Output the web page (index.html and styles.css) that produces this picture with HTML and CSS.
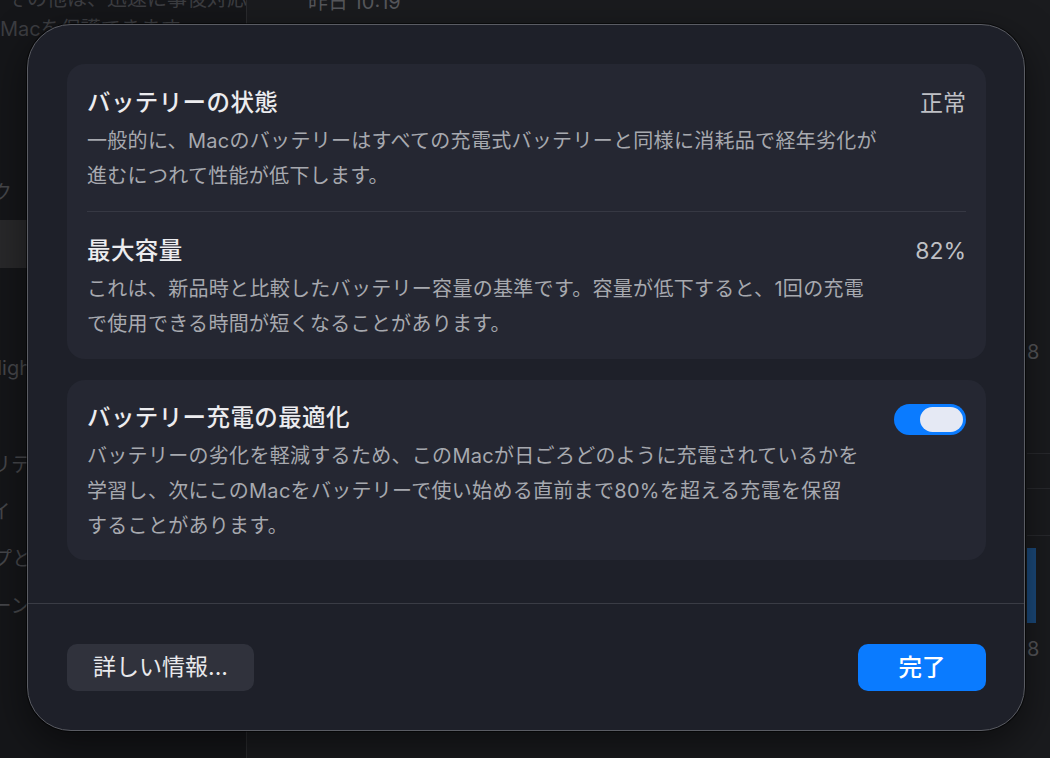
FILE: index.html
```html
<!DOCTYPE html>
<html lang="ja">
<head>
<meta charset="utf-8">
<title>バッテリーの状態</title>
<link rel="stylesheet" href="styles.css">
</head>
<body>
<div class="app">
  <aside class="sidebar">
    <p class="side-note">その他は、迅速に事後対応して<br>Macを保護できます。</p>
    <ul class="side-list">
      <li class="side-item">ネットワーク</li>
      <li class="side-item selected">バッテリー</li>
      <li class="side-item gap-l">Siri と Spotlight</li>
      <li class="side-item gap-m">アクセシビリティ</li>
      <li class="side-item">ディスプレイ</li>
      <li class="side-item">デスクトップと Dock</li>
      <li class="side-item">タイムマシーン</li>
    </ul>
  </aside>
  <main class="main">
    <div class="main-content">
      <div class="time">昨日 10:19</div>
    </div>
    <div class="chart">
      <div class="axis-label first">8</div>
      <div class="gridline g1"></div>
      <div class="gridline g2"></div>
      <div class="gridline g3"></div>
      <div class="bar"></div>
      <div class="axis-label last">8</div>
    </div>
  </main>
</div>

<div class="dialog" role="dialog">
  <div class="dialog-body">
    <section class="card">
      <div class="row row-top">
        <div class="row-text">
          <h2 class="row-title">バッテリーの状態</h2>
          <p class="row-desc">一般的に、Macのバッテリーはすべての充電式バッテリーと同様に消耗品で経年劣化が<br>進むにつれて性能が低下します。</p>
        </div>
        <div class="row-value">正常</div>
      </div>
      <div class="card-divider"></div>
      <div class="row row-top">
        <div class="row-text">
          <h2 class="row-title">最大容量</h2>
          <p class="row-desc">これは、新品時と比較したバッテリー容量の基準です。容量が低下すると、1回の充電<br>で使用できる時間が短くなることがあります。</p>
        </div>
        <div class="row-value">82%</div>
      </div>
    </section>
    <section class="card">
      <div class="row row-single">
        <div class="row-text">
          <h2 class="row-title">バッテリー充電の最適化</h2>
          <p class="row-desc">バッテリーの劣化を軽減するため、このMacが日ごろどのように充電されているかを<br>学習し、次にこのMacをバッテリーで使い始める直前まで80%を超える充電を保留<br>することがあります。</p>
        </div>
        <div class="toggle on" role="switch" aria-checked="true"><span class="knob"></span></div>
      </div>
    </section>
  </div>
  <div class="dialog-divider"></div>
  <div class="dialog-footer">
    <button class="btn btn-secondary">詳しい情報...</button>
    <button class="btn btn-primary">完了</button>
  </div>
</div>
</body>
</html>
```

FILE: styles.css
```css
* { box-sizing: border-box; }

html, body {
  margin: 0;
  padding: 0;
}

body {
  width: 1050px;
  height: 758px;
  overflow: hidden;
  background: #131417;
  font-family: "Inter", "Noto Sans CJK JP", "Noto Sans", sans-serif;
  position: relative;
}

/* ---------- background window ---------- */
.app {
  display: grid;
  grid-template-columns: 247px 1fr;
  height: 758px;
}

.sidebar {
  background: #151619;
  border-right: 1px solid #2a2b2e;
  overflow: hidden;
}

.side-note {
  margin: -16px 0 0 0;
  font-size: 20px;
  line-height: 30px;
  color: #3c3d41;
  text-indent: 7px;
  white-space: nowrap;
}

.side-list {
  list-style: none;
  margin: 124px 0 0 -108px;
  padding: 0;
}

.side-item {
  height: 47px;
  display: flex;
  align-items: center;
  font-size: 20px;
  color: #46474b;
  white-space: nowrap;
}

.side-item.selected {
  height: 48px;
  margin-top: 5px;
  background: #29292b;
}

.side-item.gap-l { margin-top: 75px; }
.side-item.gap-m { margin-top: 50px; }

.main {
  background: #1a1b1e;
  display: grid;
  grid-template-columns: 1fr 23px;
  overflow: hidden;
}

.main-content {
  padding-left: 61px;
}

.time {
  margin-top: -12px;
  font-size: 20px;
  line-height: 28px;
  color: #56575b;
}

.chart {
  display: flex;
  flex-direction: column;
  padding-top: 340px;
}

.axis-label {
  height: 24px;
  line-height: 24px;
  font-size: 20px;
  color: #55565a;
}

.axis-label.last { margin-top: 14px; }

.gridline {
  height: 1px;
  background: #28292d;
}

.g1 { margin-top: 89px; }
.g2 { margin-top: 34px; }
.g3 { margin-top: 46px; }

.bar {
  margin-top: 12px;
  width: 9px;
  height: 75px;
  background: #1b4a7c;
}

/* ---------- dialog ---------- */
.dialog {
  position: absolute;
  left: 27px;
  top: 24px;
  width: 998px;
  background: #1e2029;
  border: 1px solid #5a5c63;
  border-radius: 44px;
  box-shadow: 0 0 0 1px rgba(0, 0, 0, 0.55), 0 14px 40px rgba(0, 0, 0, 0.5);
  display: flex;
  flex-direction: column;
  overflow: hidden;
}

.dialog-body {
  padding: 39px 38px 0 39px;
  display: flex;
  flex-direction: column;
  gap: 21px;
}

.card {
  background: #252732;
  border-radius: 18px;
}

.row {
  display: flex;
  justify-content: space-between;
  align-items: flex-start;
  padding: 25px 20px 17px 20px;
}

.row-single {
  padding: 24px 20px 16px 20px;
}

.row-text {
  display: flex;
  flex-direction: column;
  gap: 7px;
}

.row-title {
  margin: 0;
  font-size: 23.5px;
  line-height: 28px;
  font-weight: 500;
  letter-spacing: 0.4px;
  color: #ececef;
  white-space: nowrap;
}

.row-desc {
  margin: 0;
  font-size: 20px;
  line-height: 35px;
  letter-spacing: 0.3px;
  color: #a7a9af;
  white-space: nowrap;
}

.row-value {
  font-size: 23px;
  line-height: 28px;
  color: #bfc0c5;
  white-space: nowrap;
}

.card-divider {
  height: 1px;
  margin: 0 20px;
  background: #363843;
}

.toggle {
  width: 72px;
  height: 31px;
  border-radius: 16px;
  background: #0a7bff;
  display: flex;
  justify-content: flex-end;
  align-items: center;
  padding: 3px;
  flex: none;
}

.knob {
  width: 43px;
  height: 25px;
  border-radius: 13px;
  background: #e5e9f4;
}

.dialog-divider {
  margin-top: 43px;
  height: 1px;
  background: #3a3c45;
}

.dialog-footer {
  display: flex;
  justify-content: space-between;
  align-items: center;
  padding: 40px 38px 39px 39px;
}

.btn {
  height: 47px;
  border: none;
  border-radius: 10px;
  font-family: inherit;
  font-size: 23px;
  line-height: 47px;
  padding: 0;
  cursor: default;
}

.btn-secondary {
  width: 187px;
  background: #30323c;
  color: #e9e9ec;
}

.btn-primary {
  width: 128px;
  background: #0a7bff;
  color: #ffffff;
  font-size: 23.5px;
  font-weight: 500;
}
```
